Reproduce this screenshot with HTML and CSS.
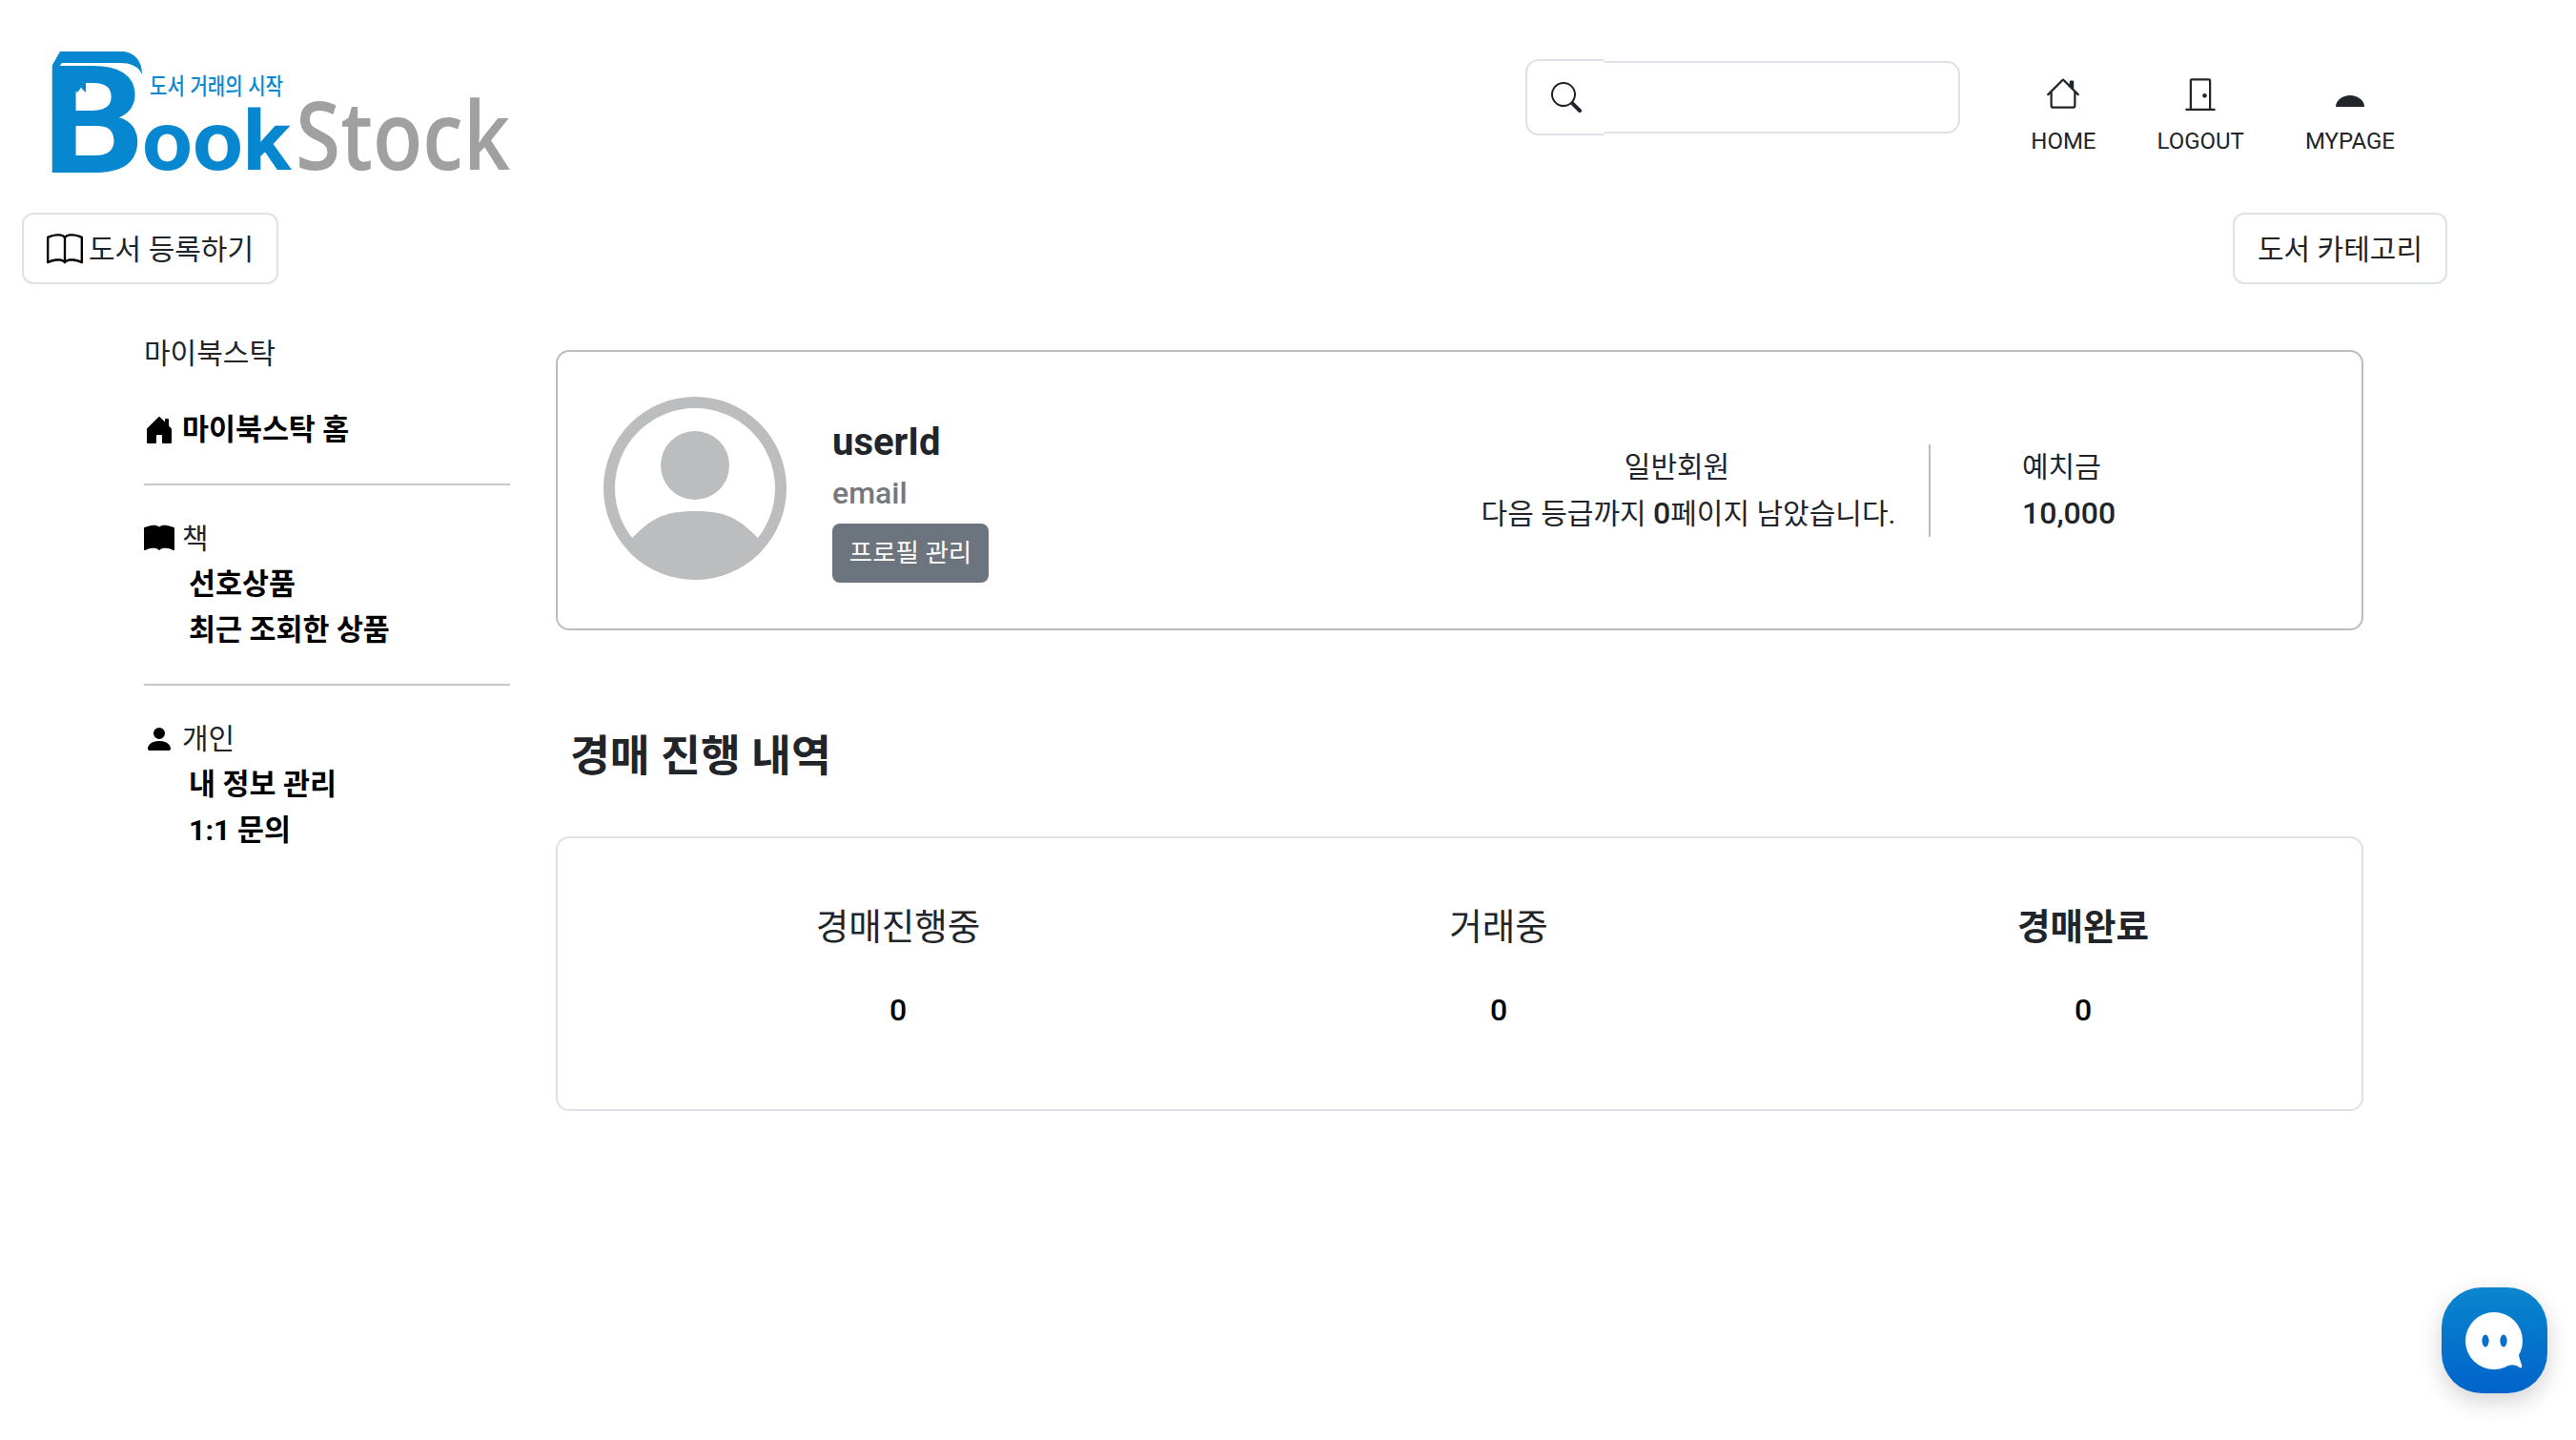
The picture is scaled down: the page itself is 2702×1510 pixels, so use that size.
FILE: index.html
```html
<!DOCTYPE html>
<html lang="ko">
<head>
  <meta charset="UTF-8">
  <meta name="viewport" content="width=device-width, initial-scale=1.0">
  <title>BookStock</title>
  <link rel="stylesheet" href="styles.css">
</head>
<body>

  <!-- 상단 헤더 -->
  <header class="header">
    <a class="logo" href="#">
      <svg width="482" height="127" viewBox="0 0 482 127">
        <path d="M0 14 L8 0 H72 C86 0 94 10 94 24 C90 15 82 12 70 12 H10 L0 24 Z" fill="#0887d1"/>
        <text class="logo-b" x="-11" y="127" textLength="108" lengthAdjust="spacingAndGlyphs">B</text>
        <path d="M22 31 H35 V43 L30 38 L26 43 L22 39 Z" fill="#0887d1"/>
        <text class="logo-tag" x="102" y="45" textLength="140" lengthAdjust="spacingAndGlyphs">도서 거래의 시작</text>
        <text class="logo-ook" x="94" y="124" textLength="156" lengthAdjust="spacingAndGlyphs">ook</text>
        <text class="logo-stock" x="255" y="124" textLength="225" lengthAdjust="spacingAndGlyphs">Stock</text>
      </svg>
    </a>
    <div class="header-right">
      <div class="search">
        <span class="search-addon">
          <svg width="32" height="32" viewBox="0 0 16 16" fill="#212529"><path d="M11.742 10.344a6.5 6.5 0 1 0-1.397 1.398h-.001c.03.04.062.078.098.115l3.85 3.85a1 1 0 0 0 1.415-1.414l-3.85-3.85a1.007 1.007 0 0 0-.115-.1zM12 6.5a5.5 5.5 0 1 1-11 0 5.5 5.5 0 0 1 11 0z"/></svg>
        </span>
        <input class="search-input" type="text">
      </div>
      <nav class="nav">
        <a class="nav-item" href="#">
          <svg width="36" height="36" viewBox="0 0 16 16" fill="#212529"><path d="M8.707 1.5a1 1 0 0 0-1.414 0L.646 8.146a.5.5 0 0 0 .708.708L2 8.207V13.5A1.5 1.5 0 0 0 3.5 15h9a1.5 1.5 0 0 0 1.5-1.5V8.207l.646.647a.5.5 0 0 0 .708-.708L13 5.793V2.5a.5.5 0 0 0-.5-.5h-1a.5.5 0 0 0-.5.5v1.293L8.707 1.5ZM13 7.207V13.5a.5.5 0 0 1-.5.5h-9a.5.5 0 0 1-.5-.5V7.207l5-5 5 5Z"/></svg>
          HOME
        </a>
        <a class="nav-item" href="#">
          <svg width="36" height="36" viewBox="0 0 16 16" fill="#212529"><path d="M3 2a1 1 0 0 1 1-1h8a1 1 0 0 1 1 1v13h1.5a.5.5 0 0 1 0 1h-13a.5.5 0 0 1 0-1H3V2zm1 13h8V2H4v13z"/><path d="M9 9a1 1 0 1 0 2 0 1 1 0 0 0-2 0z"/></svg>
          LOGOUT
        </a>
        <a class="nav-item" href="#">
          <svg width="36" height="36" viewBox="0 0 36 36" fill="#212529"><path d="M3 32 C3 25 10 20 18 20 C26 20 33 25 33 32 Z"/></svg>
          MYPAGE
        </a>
      </nav>
    </div>
  </header>

  <div class="toolbar">
    <button class="tool-btn">
      <svg class="tool-icon" width="38" height="38" viewBox="0 0 16 16" fill="#000"><path d="M1 2.828c.885-.37 2.154-.769 3.388-.893 1.33-.134 2.458.063 3.112.752v9.746c-.935-.53-2.12-.603-3.213-.493-1.18.12-2.37.461-3.287.811V2.828zm7.5-.141c.654-.689 1.782-.886 3.112-.752 1.234.124 2.503.523 3.388.893v9.923c-.918-.35-2.107-.692-3.287-.81-1.094-.111-2.278-.039-3.213.492V2.687zM8 1.783C7.015.936 5.587.81 4.287.94c-1.514.153-3.042.672-3.994 1.105A.5.5 0 0 0 0 2.5v11a.5.5 0 0 0 .707.455c.882-.4 2.303-.881 3.68-1.02 1.409-.142 2.59.087 3.223.877a.5.5 0 0 0 .78 0c.633-.79 1.814-1.019 3.222-.877 1.378.139 2.8.62 3.681 1.02A.5.5 0 0 0 16 13.5v-11a.5.5 0 0 0-.293-.455c-.952-.433-2.48-.952-3.994-1.105C10.413.809 8.985.936 8 1.783z"/></svg>
      도서 등록하기
    </button>
    <button class="tool-btn">도서 카테고리</button>
  </div>

  <main class="main">
    <!-- 사이드바 -->
    <aside class="sidebar">
      <div class="side-title">마이북스탁</div>
      <a class="side-home" href="#">
        <svg class="side-icon" width="32" height="32" viewBox="0 0 16 16" fill="#000"><path d="M6.5 14.5v-3.505c0-.245.25-.495.5-.495h2c.25 0 .5.25.5.5v3.5a.5.5 0 0 0 .5.5h4a.5.5 0 0 0 .5-.5v-7a.5.5 0 0 0-.146-.354L13 5.793V2.5a.5.5 0 0 0-.5-.5h-1a.5.5 0 0 0-.5.5v1.293L8.354 1.146a.5.5 0 0 0-.708 0l-6 6A.5.5 0 0 0 1.5 7.5v7a.5.5 0 0 0 .5.5h4a.5.5 0 0 0 .5-.5z"/></svg>
        마이북스탁 홈
      </a>
      <hr class="side-line">
      <div class="side-head">
        <svg class="side-icon" width="32" height="32" viewBox="0 0 16 16" fill="#000"><path d="M8 1.783C7.015.936 5.587.81 4.287.94c-1.514.153-3.042.672-3.994 1.105A.5.5 0 0 0 0 2.5v11a.5.5 0 0 0 .707.455c.882-.4 2.303-.881 3.68-1.02 1.409-.142 2.59.087 3.223.877a.5.5 0 0 0 .78 0c.633-.79 1.814-1.019 3.222-.877 1.378.139 2.8.62 3.681 1.02A.5.5 0 0 0 16 13.5v-11a.5.5 0 0 0-.293-.455c-.952-.433-2.48-.952-3.994-1.105C10.413.809 8.985.936 8 1.783z"/></svg>
        책
      </div>
      <a class="side-link" href="#">선호상품</a>
      <a class="side-link" href="#">최근 조회한 상품</a>
      <hr class="side-line">
      <div class="side-head">
        <svg class="side-icon" width="32" height="32" viewBox="0 0 16 16" fill="#000"><path d="M3 14s-1 0-1-1 1-4 6-4 6 3 6 4-1 1-1 1H3Zm5-6a3 3 0 1 0 0-6 3 3 0 0 0 0 6Z"/></svg>
        개인
      </div>
      <a class="side-link" href="#">내 정보 관리</a>
      <a class="side-link" href="#">1:1 문의</a>
    </aside>

    <section class="content">
      <!-- 프로필 -->
      <div class="profile">
        <svg class="avatar" width="192" height="192" viewBox="0 0 192 192" fill="#bbbdbf">
          <circle cx="96" cy="96" r="90" fill="none" stroke="#bbbdbf" stroke-width="12"/>
          <circle cx="96" cy="72" r="36"/>
          <path d="M28 150 C50 128 62 120 96 120 C130 120 142 128 164 150 A90 90 0 0 1 28 150 Z"/>
        </svg>
        <div class="profile-info">
          <div class="user-id">userId</div>
          <div class="user-email">email</div>
          <button class="profile-btn">프로필 관리</button>
        </div>
        <div class="grade">
          <div class="grade-name">일반회원</div>
          <div>다음 등급까지 <span class="num">0</span>페이지 남았습니다.</div>
        </div>
        <div class="deposit">
          <div>예치금</div>
          <div class="num">10,000</div>
        </div>
      </div>

      <h2 class="section-title">경매 진행 내역</h2>

      <div class="auction">
        <div class="auction-col col-1">
          <div class="auction-label">경매진행중</div>
          <div class="auction-value">0</div>
        </div>
        <div class="auction-col col-2">
          <div class="auction-label">거래중</div>
          <div class="auction-value">0</div>
        </div>
        <div class="auction-col col-3">
          <div class="auction-label done">경매완료</div>
          <div class="auction-value">0</div>
        </div>
      </div>
    </section>
  </main>

  <!-- 채팅 버튼 -->
  <a class="chat-fab" href="#">
    <svg width="111" height="111" viewBox="0 0 111 111">
      <path d="M55 56 L70 82 Q77 80 82 84 Q85 85 84 81 Q82 76 81 71 Z" fill="#fff"/>
      <circle cx="55" cy="56" r="30" fill="#fff"/>
      <ellipse cx="46" cy="56" rx="3.6" ry="6.5" fill="#0a6fca"/>
      <ellipse cx="65" cy="56" rx="3.6" ry="6.5" fill="#0a6fca"/>
    </svg>
  </a>

</body>
</html>
```

FILE: styles.css
```css
* {
  box-sizing: border-box;
}
body {
  margin: 0;
  font-family: Roboto, "Noto Sans CJK KR", sans-serif;
  font-size: 30px;
  line-height: 48px;
  color: #212529;
  background: #fff;
}
a {
  color: inherit;
  text-decoration: none;
}

/* header */
.header {
  display: flex;
  justify-content: space-between;
  height: 223px;
  padding: 54px 190px 0 55px;
}
.logo {
  display: block;
  height: 127px;
}
.logo svg {
  display: block;
  overflow: visible;
}
.logo-b {
  font-family: Roboto, sans-serif;
  font-weight: 700;
  font-size: 158px;
  fill: #0887d1;
}
.logo-tag {
  font-family: "Noto Sans CJK KR", sans-serif;
  font-size: 24px;
  font-weight: 500;
  fill: #0887d1;
}
.logo-ook {
  font-family: Roboto, sans-serif;
  font-weight: 700;
  font-size: 88px;
  fill: #0887d1;
}
.logo-stock {
  font-family: "Open Sans", sans-serif;
  font-weight: 600;
  font-size: 100px;
  fill: #a0a0a0;
}
.header-right {
  display: flex;
  align-items: flex-start;
  gap: 74px;
}
.search {
  display: flex;
  align-items: center;
  width: 456px;
  margin-top: 8px;
}
.search-addon {
  display: flex;
  align-items: center;
  justify-content: center;
  width: 83px;
  height: 80px;
  border: 2px solid #dee2e6;
  border-right: 0;
  border-radius: 14px 0 0 14px;
}
.search-input {
  flex: 1;
  min-width: 0;
  height: 76px;
  border: 2px solid #dee2e6;
  border-left: 0;
  border-radius: 0 14px 14px 0;
  outline: none;
}
.nav {
  display: flex;
  gap: 64px;
  margin-top: 26px;
}
.nav-item {
  display: flex;
  flex-direction: column;
  align-items: center;
  gap: 17px;
  font-size: 24px;
  font-weight: 400;
  line-height: 30px;
}
.nav-item svg {
  display: block;
}

/* toolbar */
.toolbar {
  display: flex;
  justify-content: space-between;
  padding: 0 135px 0 23px;
}
.tool-btn {
  display: flex;
  align-items: center;
  gap: 6px;
  height: 75px;
  padding: 0 24px 3px;
  font-family: inherit;
  font-size: 30px;
  color: #212529;
  background: #fff;
  border: 2px solid #dee2e6;
  border-radius: 12px;
}
.tool-icon {
  margin-top: 5px;
}

/* layout */
.main {
  display: flex;
  gap: 48px;
  padding: 49px 0 0 151px;
}

/* sidebar */
.sidebar {
  width: 384px;
}
.side-home {
  display: flex;
  align-items: center;
  gap: 8px;
  margin-top: 32px;
  font-size: 30.4px;
  font-weight: 700;
  color: #000;
}
.side-icon {
  flex: none;
}
.side-line {
  height: 2px;
  margin: 32px 0;
  background: #c8c8c8;
  border: 0;
}
.side-head {
  display: flex;
  align-items: center;
  gap: 8px;
}
.side-link {
  display: block;
  padding-left: 47px;
  font-size: 30.4px;
  font-weight: 700;
  color: #000;
}

/* content */
.content {
  width: 1896px;
  margin-top: 20px;
}
.profile {
  display: flex;
  align-items: center;
  height: 294px;
  padding-left: 48px;
  border: 2px solid #bdbdbd;
  border-radius: 14px;
}
.avatar {
  flex: none;
  margin: 0 48px 4px 0;
}
.profile-info {
  width: 680px;
  padding-top: 17px;
}
.user-id {
  font-size: 40px;
  font-weight: 700;
  line-height: 58px;
}
.user-email {
  font-size: 32px;
  font-weight: 500;
  line-height: 49px;
  color: #76797c;
}
.profile-btn {
  display: block;
  height: 62px;
  width: 164px;
  margin-top: 7px;
  padding: 0 0 5px;
  font-family: inherit;
  font-size: 26.5px;
  color: #fff;
  background: #6c757d;
  border: 0;
  border-radius: 8px;
}
.grade {
  width: 472px;
  padding-right: 34px;
  height: 97px;
  display: flex;
  flex-direction: column;
  justify-content: center;
  text-align: center;
  border-right: 2px solid #bdbdbd;
}
.grade-name {
  padding-right: 24px;
}
.deposit {
  padding-left: 96px;
}
.num {
  font-size: 32px;
  font-weight: 500;
}
.section-title {
  margin: 0;
  padding: 98px 0 48px 15px;
  font-size: 45.5px;
  font-weight: 700;
  line-height: 70px;
}
.auction {
  position: relative;
  height: 288px;
  border: 2px solid #dee2e6;
  border-radius: 14px;
}
.auction-col {
  position: absolute;
  top: 65px;
  width: 400px;
  text-align: center;
}
.col-1 {
  left: 157px;
}
.col-2 {
  left: 787px;
}
.col-3 {
  left: 1400px;
}
.auction-label {
  font-size: 37.5px;
  line-height: 56px;
}
.auction-label.done {
  font-weight: 700;
}
.auction-value {
  margin-top: 31px;
  font-size: 32px;
  font-weight: 500;
  line-height: 56px;
  color: #000;
}

/* chat button */
.chat-fab {
  position: fixed;
  left: 2561px;
  top: 1350px;
  width: 111px;
  height: 111px;
  border-radius: 42px;
  background: linear-gradient(#0a86cf, #0063c9);
  box-shadow: 0 8px 24px rgba(0, 0, 0, 0.18);
}
.chat-fab svg {
  display: block;
}
```
